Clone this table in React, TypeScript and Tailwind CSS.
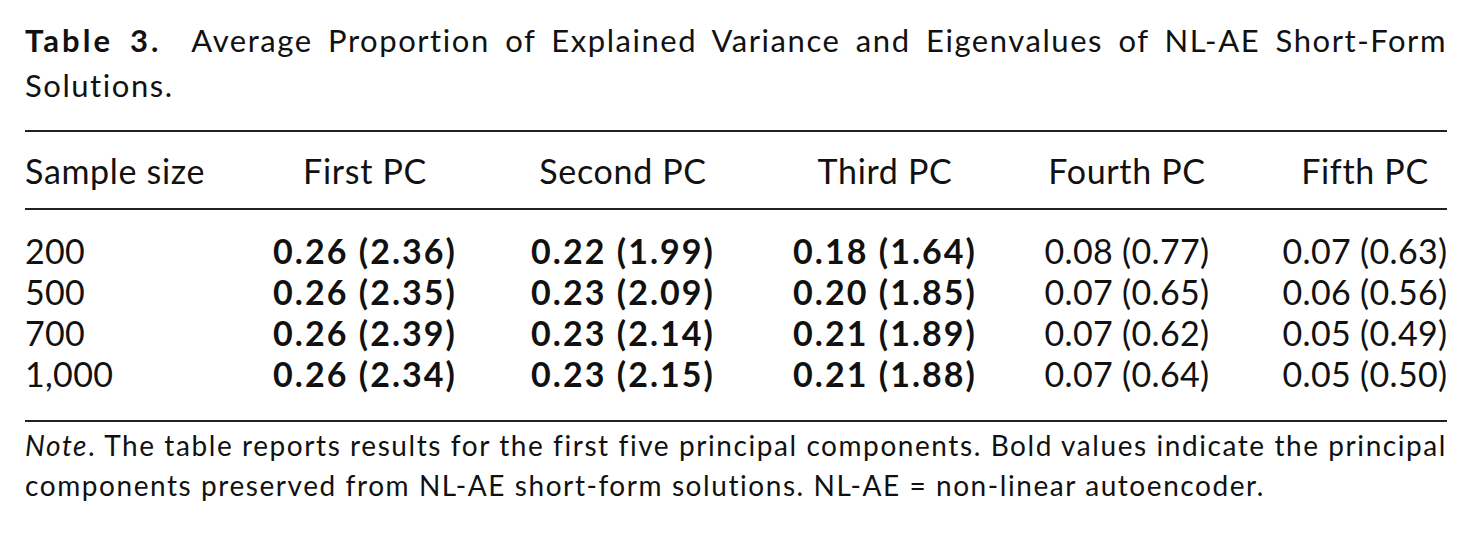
const rows = [
  { n: "200", v: ["0.26 (2.36)", "0.22 (1.99)", "0.18 (1.64)", "0.08 (0.77)", "0.07 (0.63)"] },
  { n: "500", v: ["0.26 (2.35)", "0.23 (2.09)", "0.20 (1.85)", "0.07 (0.65)", "0.06 (0.56)"] },
  { n: "700", v: ["0.26 (2.39)", "0.23 (2.14)", "0.21 (1.89)", "0.07 (0.62)", "0.05 (0.49)"] },
  { n: "1,000", v: ["0.26 (2.34)", "0.23 (2.15)", "0.21 (1.88)", "0.07 (0.64)", "0.05 (0.50)"] },
]

const headers = ["First PC", "Second PC", "Third PC", "Fourth PC", "Fifth PC"]

// first three PCs are the preserved ones -> bold
const boldCols = 3

const grid = "grid grid-cols-[258px_164px_352px_172px_312px_164px]"

export default function App() {
  return (
    <div className="min-h-screen bg-white text-[#111] pl-[25px] pr-[26px] pt-[18px]" style={{ fontFamily: "Lato, 'Open Sans', sans-serif" }}>
      {/* Caption */}
      <div className="text-[31px] leading-[45px] tracking-[0.05em]">
        <p className="text-justify [text-align-last:justify]">
          <span className="font-bold tracking-[0.1em]">Table 3.</span>&nbsp; Average Proportion of Explained Variance and Eigenvalues of NL-AE Short-Form
        </p>
        <p>Solutions.</p>
      </div>

      {/* Table */}
      <div className="mt-[22px] border-t-2 border-[#222]">
        <div className={`${grid} h-[78px] items-center text-[34px] tracking-[0.02em] border-b-2 border-[#222]`}>
          <div className="whitespace-nowrap">Sample size</div>
          {headers.map((h) => (
            <div key={h} className="flex justify-center whitespace-nowrap">{h}</div>
          ))}
        </div>

        <div className="pt-[20px] pb-[26px] text-[34px] leading-[41px]">
          {rows.map((r) => (
            <div key={r.n} className={grid}>
              <div className="whitespace-nowrap tracking-[0.01em]">{r.n}</div>
              {r.v.map((val, i) => (
                <div
                  key={i}
                  className={`flex justify-center whitespace-nowrap ${i < boldCols ? "font-bold tracking-[0.06em]" : "tracking-[0.01em]"}`}
                >
                  {val}
                </div>
              ))}
            </div>
          ))}
        </div>
      </div>

      {/* Note */}
      <div className="border-t-2 border-[#222] pt-[3px] text-[28px] leading-[40px] tracking-[0.056em]">
        <p className="text-justify [text-align-last:justify]">
          <em>Note</em>. The table reports results for the first five principal components. Bold values indicate the principal
        </p>
        <p>components preserved from NL-AE short-form solutions. NL-AE = non-linear autoencoder.</p>
      </div>
    </div>
  )
}
